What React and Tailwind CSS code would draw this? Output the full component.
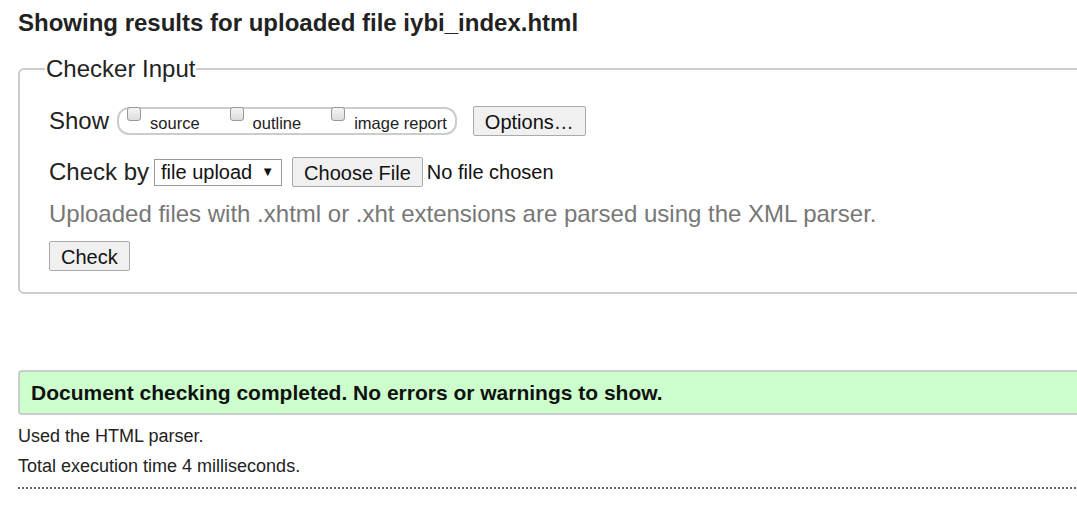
export default function App() {
  return (
    <div
      className="w-[1077px] h-[513px] overflow-hidden bg-white text-[#222]"
      style={{ fontFamily: '"Liberation Sans", Arial, sans-serif' }}
    >
      <div className="w-[1200px] pl-[18px] pt-[9px]">
        <h1 className="text-[24px] font-bold leading-[28px] text-[#222]">
          Showing results for uploaded file iybi_index.html
        </h1>

        {/* checker input */}
        <fieldset className="mt-[18px] border-2 border-[#ccc] rounded-[6px] pl-[29px] pr-4 pt-[4px] pb-[21px]">
          <legend className="-ml-[4px] px-[1px] text-[24px] leading-[28px] text-[#222]">
            Checker Input
          </legend>

          <div className="flex items-center h-[30px] mt-[19px]">
            <span className="text-[24px] text-[#222]">Show</span>
            <div className="ml-[8px] flex items-center h-[28px] border-2 border-[#ccc] rounded-[12px] pl-[8px] pr-[8px]">
              <Check label="source" />
              <Check label="outline" className="ml-[30px]" />
              <Check label="image report" className="ml-[30px]" />
            </div>
            <button className="ml-[16px] h-[30px] px-[11px] border border-[#aaa] rounded-[2px] bg-[#f0f0f0] text-[20px] text-[#111]">
              Options…
            </button>
          </div>

          <div className="flex items-center h-[30px] mt-[21px]">
            <span className="text-[24px] text-[#222]">Check by</span>
            <div className="ml-[5px] flex items-center h-[27px] border border-[#999] pl-[6px] pr-[7px] bg-white">
              <span className="text-[20px] text-[#111]">file upload</span>
              <span className="ml-[9px] text-[13px] text-[#111]">▼</span>
            </div>
            <button className="ml-[10px] h-[30px] px-[11px] border border-[#aaa] rounded-[2px] bg-[#f0f0f0] text-[20px] text-[#111]">
              Choose File
            </button>
            <span className="ml-[4px] text-[20px] text-[#111]">No file chosen</span>
          </div>

          <p className="mt-[12px] text-[24px] leading-[30px] text-[#777]">
            Uploaded files with .xhtml or .xht extensions are parsed using the XML parser.
          </p>

          <button className="mt-[12px] h-[30px] px-[11px] border border-[#aaa] rounded-[2px] bg-[#f0f0f0] text-[20px] text-[#111]">
            Check
          </button>
        </fieldset>

        {/* result */}
        <div className="mt-[76px] h-[45px] flex items-center border-2 border-[#ccc] rounded-[4px] bg-[#ccffcc] pl-[11px]">
          <span className="text-[21px] font-bold text-[#111]">
            Document checking completed. No errors or warnings to show.
          </span>
        </div>

        <p className="mt-[11px] text-[18px] leading-[20px] text-[#222]">Used the HTML parser.</p>
        <p className="mt-[10px] text-[18px] leading-[20px] text-[#222]">
          Total execution time 4 milliseconds.
        </p>
        <div className="mt-[11px] border-t-2 border-dotted border-[#666]" />
      </div>
    </div>
  );
}

function Check({ label, className = "" }) {
  return (
    <label className={`flex items-center ${className}`}>
      <span className="self-start mt-[1px] w-[14px] h-[14px] border border-[#999] rounded-[3px] bg-gradient-to-b from-[#f4f4f4] to-[#ddd]" />
      <span className="ml-[9px] mt-[5px] text-[16.5px] text-[#222]">{label}</span>
    </label>
  );
}
